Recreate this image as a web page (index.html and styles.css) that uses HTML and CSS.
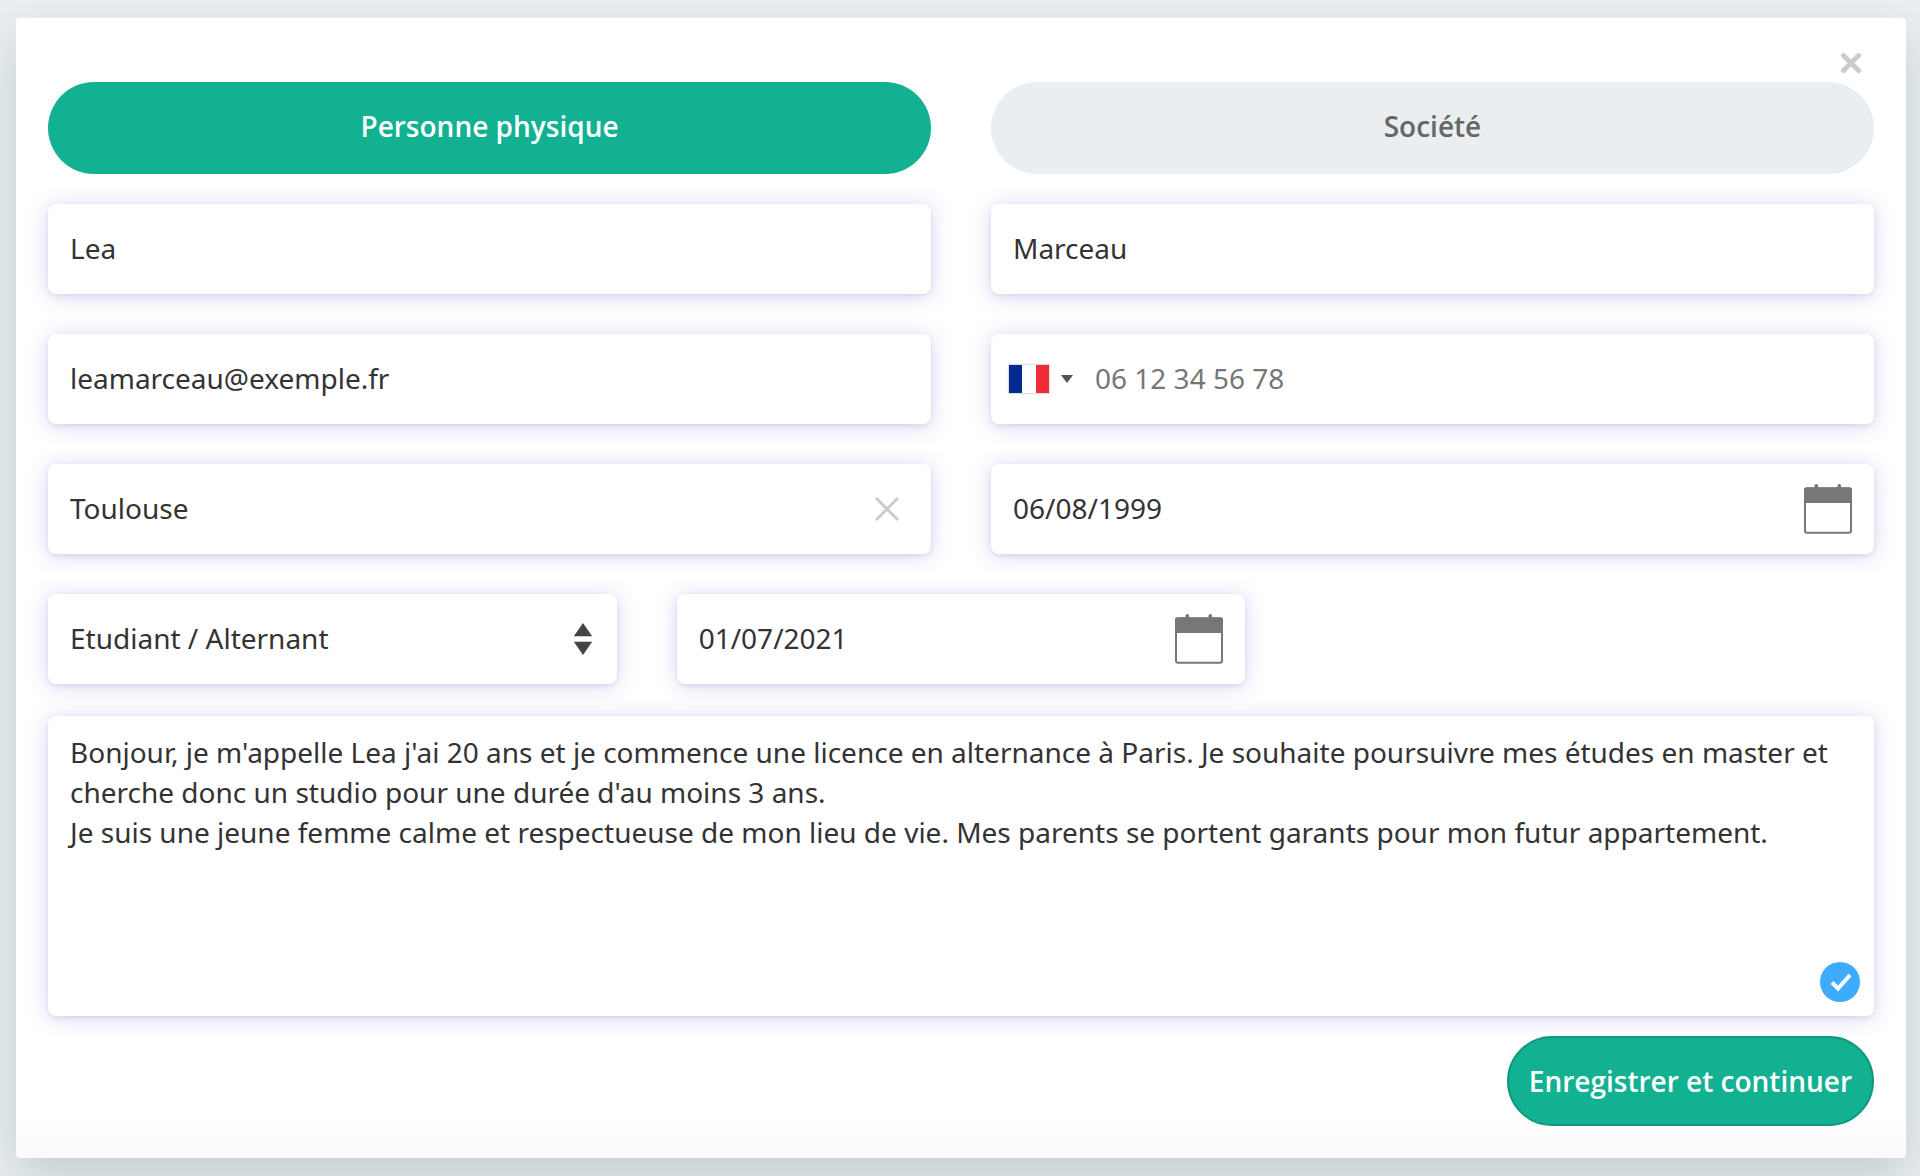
FILE: index.html
```html
<!DOCTYPE html>
<html lang="fr">
<head>
    <meta charset="UTF-8">
    <meta name="viewport" content="width=device-width, initial-scale=1.0">
    <title>Mon profil</title>
    <link rel="stylesheet" href="styles.css">
</head>
<body>
    <form class="card">
        <button class="close" type="button" aria-label="Fermer">
            <svg width="22" height="22" viewBox="0 0 22 22"><path d="M3.4 3.4L18.6 18.6M18.6 3.4L3.4 18.6"/></svg>
        </button>
        <div class="row two">
            <button class="tab active" type="button">Personne physique</button>
            <button class="tab" type="button">Société</button>
        </div>
        <div class="fields">
            <div class="row two">
                <div class="field"><input type="text" aria-label="Prénom" value="Lea"></div>
                <div class="field"><input type="text" aria-label="Nom" value="Marceau"></div>
            </div>
            <div class="row two">
                <div class="field"><input type="email" aria-label="Email" value="leamarceau@exemple.fr"></div>
                <div class="field phone">
                    <button class="country" type="button" aria-label="Pays">
                        <span class="flag"></span>
                        <svg width="12" height="8" viewBox="0 0 12 8"><path d="M0 0H12L6 8Z" fill="#555"/></svg>
                    </button>
                    <input type="tel" aria-label="Téléphone" placeholder="06 12 34 56 78">
                </div>
            </div>
            <div class="row two">
                <div class="field">
                    <input type="text" aria-label="Ville" value="Toulouse">
                    <button class="clear" type="button" aria-label="Effacer">
                        <svg width="24" height="24" viewBox="0 0 24 24"><path d="M1 1L23 23M23 1L1 23"/></svg>
                    </button>
                </div>
                <div class="field">
                    <input type="text" aria-label="Date de naissance" value="06/08/1999">
                    <button class="calendar" type="button" aria-label="Choisir la date de naissance">
                        <svg width="48" height="50" viewBox="0 0 48 50">
                            <rect x="1" y="4.2" width="46" height="44.6" rx="2"/>
                            <path class="solid" d="M0 19V5.500Q0 3.500 2 3.500H10.500V1.800Q10.500 0 12.300 0T14.100 1.800V3.500H33.500V1.800Q33.500 0 35.300 0T37.100 1.800V3.500H46Q48 3.500 48 5.500V19Z"/>
                        </svg>
                    </button>
                </div>
            </div>
            <div class="row three">
                <div class="field">
                    <select aria-label="Situation">
                        <option>Etudiant / Alternant</option>
                        <option>Salarié</option>
                    </select>
                    <svg class="arrows" width="20" height="32" viewBox="0 0 20 32"><path d="M10 0L19 13H1ZM1 19H19L10 32Z" fill="#444"/><path d="M1 13.500H19M1 18.500H19" stroke="#ccc"/></svg>
                </div>
                <div class="field">
                    <input type="text" aria-label="Date d'entrée" value="01/07/2021">
                    <button class="calendar" type="button" aria-label="Choisir la date d'entrée">
                        <svg width="48" height="50" viewBox="0 0 48 50">
                            <rect x="1" y="4.2" width="46" height="44.6" rx="2"/>
                            <path class="solid" d="M0 19V5.500Q0 3.500 2 3.500H10.500V1.800Q10.500 0 12.300 0T14.100 1.800V3.500H33.500V1.800Q33.500 0 35.300 0T37.100 1.800V3.500H46Q48 3.500 48 5.500V19Z"/>
                        </svg>
                    </button>
                </div>
            </div>
        </div>
        <div class="field message">
            <textarea aria-label="Présentation">Bonjour, je m'appelle Lea j'ai 20 ans et je commence une licence en alternance à Paris. Je souhaite poursuivre mes études en master et cherche donc un studio pour une durée d'au moins 3 ans.
Je suis une jeune femme calme et respectueuse de mon lieu de vie. Mes parents se portent garants pour mon futur appartement.</textarea>
            <svg class="valid" width="40" height="40" viewBox="0 0 40 40"><circle cx="20" cy="20" r="20" fill="#3dabff"/><path d="M12 20.500L18 26.500L30 13" fill="none" stroke="#fff" stroke-width="4"/></svg>
        </div>
        <button class="save" type="submit">Enregistrer et continuer</button>
    </form>
</body>
</html>
```
FILE: styles.css
```css
*{
    box-sizing: border-box;
}
body{
    margin: 0px;
    padding: 18px 14px 18px 16px;
    background: #ebeff2;
    font-family: "Noto Sans", "Open Sans", sans-serif;
}
button, input, select, textarea{
    font: inherit; color: #333;
    border: none; background: none;
    margin: 0px; padding: 0px;
    outline: none;
}
button{
    cursor: pointer;
}
svg{
    display: block;
}
.card{
    position: relative;
    display: flex; flex-direction: column;
    padding: 64px 32px 32px;
    border-radius: 4px;
    background: linear-gradient(to top, #fafafa, #fff 40px);
    box-shadow: 0 20px 50px rgba(0, 50, 40, 0.18);
    font-size: 28px; line-height: 40px;
}
.close{
    position: absolute; right: 44px; top: 34px;
}
.close path{
    stroke: #ccc; stroke-width: 5; stroke-linecap: round;
}
.row{
    display: grid; gap: 60px;
}
.two{
    grid-template-columns: 1fr 1fr;
}
.three{
    grid-template-columns: 1fr 1fr 1fr;
}
.tab, .save{
    font-family: "Open Sans", sans-serif;
    font-weight: 600;
}
.tab{
    height: 92px;
    padding-bottom: 4px;
    border-radius: 46px;
    background: #eaeef1; color: #666;
}
.active{
    background: #11b191; color: #fff;
}
.fields{
    display: grid; gap: 40px;
    margin: 30px 0 32px;
}
.field{
    position: relative;
    display: flex; align-items: center;
    height: 90px;
    border-radius: 8px;
    background: #fff;
    box-shadow: 0 2px 4px rgba(50, 50, 93, 0.08), 0 2px 20px rgba(80, 90, 210, 0.26);
}
.field input, .field select{
    flex: 1; min-width: 0;
    height: 100%;
    padding: 0 22px 2px;
    appearance: none;
}
.field input::placeholder{
    color: #777; opacity: 1;
}
.country{
    display: flex; align-items: center; gap: 12px;
    padding-left: 18px;
}
.flag{
    width: 40px; height: 28px;
    background: linear-gradient(to right, #002b8f 13px, #fff 13px, #fff 27px, #ef2b3a 27px);
    box-shadow: 0 0 1px 1px #ddd;
}
.clear{
    margin-right: 32px;
}
.clear path{
    stroke: #ccc; stroke-width: 3;
}
.calendar{
    margin-right: 22px;
}
.calendar rect{
    fill: none; stroke: #777; stroke-width: 2;
}
.solid{
    fill: #777;
}
.arrows{
    position: absolute; right: 24px; top: 29px;
    pointer-events: none;
}
.message{
    height: 300px;
}
.message textarea{
    width: 100%; height: 100%;
    padding: 16px 22px;
    resize: none; overflow: hidden;
}
.valid{
    position: absolute; right: 14px; bottom: 14px;
}
.save{
    align-self: flex-end;
    height: 90px;
    margin-top: 20px; padding: 0 20px;
    border: 2px solid #0f987d; border-radius: 45px;
    background: #11b191; color: #fff;
}
```
